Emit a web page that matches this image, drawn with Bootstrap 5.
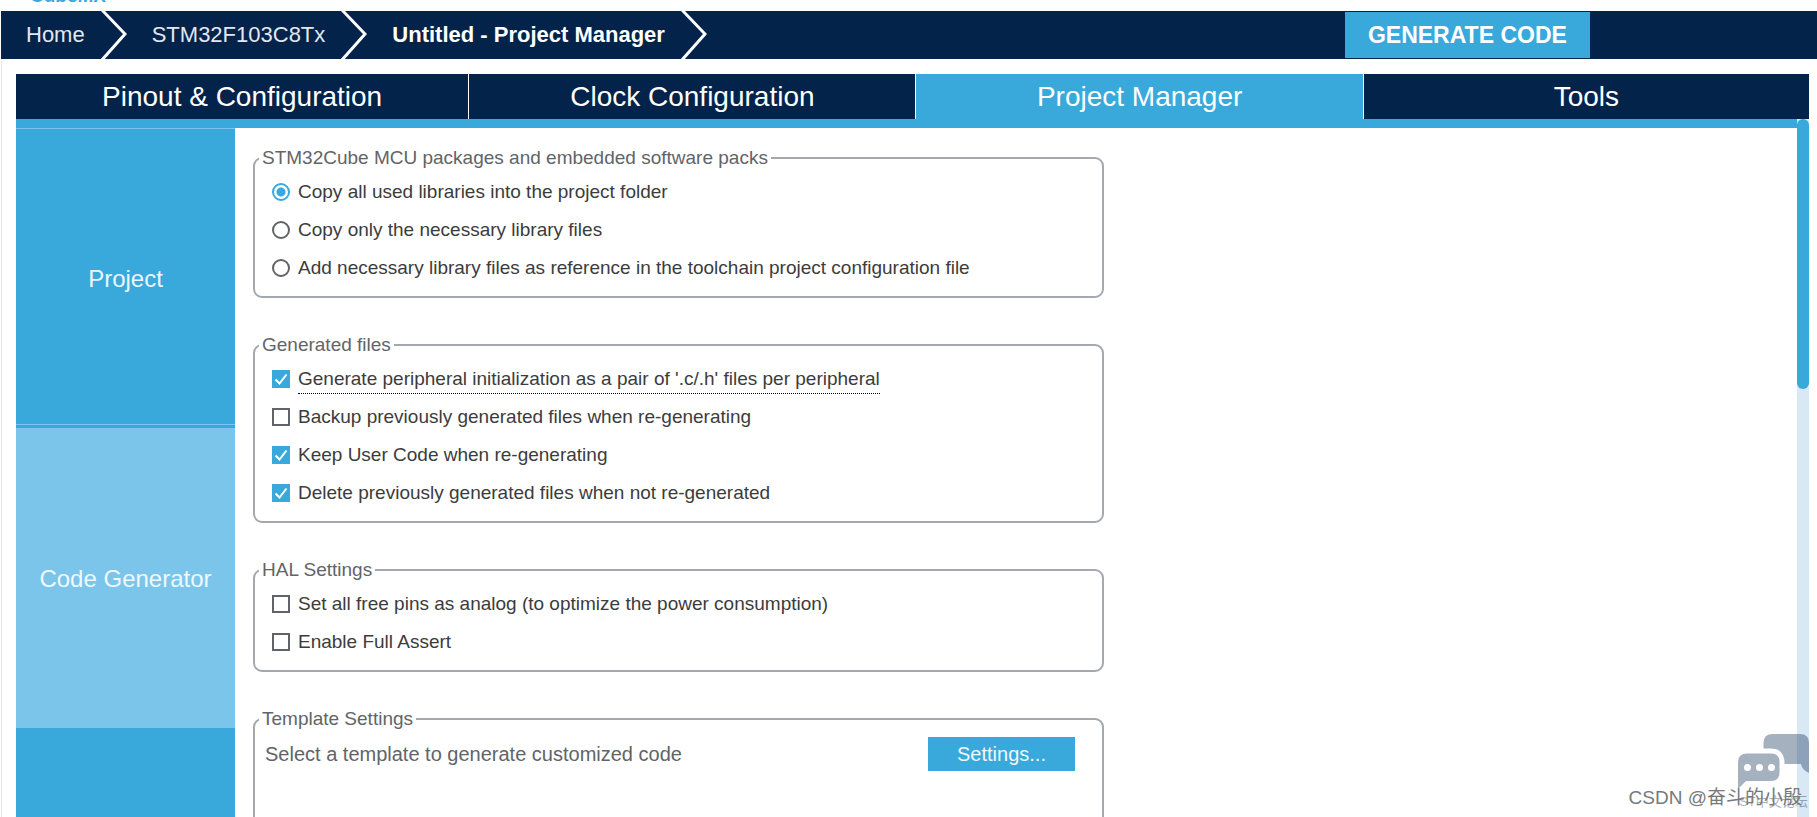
<!DOCTYPE html>
<html lang="en">
<head>
<meta charset="utf-8">
<meta name="viewport" content="width=device-width, initial-scale=1">
<title>STM32CubeMX - Project Manager</title>
<link href="https://cdn.jsdelivr.net/npm/bootstrap@5.3.0/dist/css/bootstrap.min.css" rel="stylesheet">
<style>
:root { --navy: #03234b; --sky: #39a9dc; --pale: #7cc5ea; --track: #d9e8f5; }
body { font-family: "Liberation Sans", Arial, sans-serif; font-size: 19px; line-height: 24px; color: #3c3c3c; background: #fff; }
a { text-decoration: none; }
.app-logo { height: 11px; padding-left: 30px; }
.app-logo span { color: var(--sky); font-size: 19px; font-weight: 700; line-height: 20px; margin-bottom: 5px; }
.app-header { background: var(--navy); height: 48px; margin-left: 1px; padding-left: 25px; font-size: 22px; }
.crumb { color: #fff; }
.crumb.dim { color: #e3e8ee; }
.chev { width: 26px; height: 48px; margin: 0 25px 0 16px; }
.chev path { fill: none; stroke: #fff; stroke-width: 3; }
.generate { width: 245px; height: 46px; margin-right: 12.5vw; background: var(--sky); color: #fff; font-size: 23px; line-height: 44px; font-weight: 700; }
.workspace { margin-left: 1px; border-left: 1px solid #e4e6e8; padding: 15px 8px 0 14px; }
.main-tabs { display: grid; grid-template-columns: 453fr 447fr 447fr 446fr; column-gap: 1px; }
.main-tabs a { height: 45px; line-height: 45px; background: var(--navy); color: #fff; font-size: 28px; text-align: center; }
.main-tabs a.active { background: var(--sky); }
.pane { border-top: 9px solid var(--sky); }
.side { width: 219px; background: var(--sky); }
.side button { height: 300px; border: 0; border-top: 1px solid var(--pale); background: var(--sky); color: #e9f6fc; font-size: 24px; }
.side button.before-active { box-shadow: inset 0 -3px var(--sky), inset 0 -4px var(--pale); }
.side button.active { background: var(--pale); color: #eef8fd; }
.options { padding: 18px 0 0 18px; }
.group { width: 851px; max-width: 100%; border: 2px solid #a3a9ae; border-radius: 9px; padding: 3px 17px 9px 4px; margin-bottom: 35px; }
.group legend { float: none; width: auto; margin: 0; padding: 0 3px; font-size: 19px; line-height: 24px; color: #626468; }
.opt { height: 38px; padding-left: 13px; gap: 8px; }
.opt .form-check-input { width: 18px; height: 18px; margin: 0; border: 2px solid #606468; border-radius: 0; box-shadow: none; }
.opt .form-check-input[type=radio] { border-radius: 50%; }
.opt .form-check-input[type=radio]:checked { border-color: var(--sky); background: radial-gradient(circle, var(--sky) 4px, #fff 5px); }
.opt .form-check-input[type=checkbox]:checked { border-color: var(--sky); background-color: var(--sky); background-size: 14px 14px; background-image: url("data:image/svg+xml,%3Csvg xmlns='http://www.w3.org/2000/svg' viewBox='0 0 14 14'%3E%3Cpath d='M1.500 7.500 5.500 11.500 12.500 2.500' fill='none' stroke='%23fff' stroke-width='2'/%3E%3C/svg%3E"); }
.hinted { border-bottom: 1px dotted #000; padding-top: 3px; padding-bottom: 2px; }
.template-row { padding-left: 6px; color: #626468; font-size: 20px; min-height: 180px; }
.settings { width: 147px; height: 34px; margin: 3px 10px 0 0; padding: 0; background: var(--sky); color: #eef8fd; font-size: 20px; }
.template-row p { margin: 8px 0 0; }
.scroll-track { width: 12px; background: var(--track); margin-top: -9px; }
.scroll-thumb { height: 270px; border-radius: 6px; background: var(--sky); }
.forum { right: 8px; bottom: 3px; width: 71px; color: var(--navy); opacity: .35; font-family: "Liberation Sans", "Noto Sans CJK SC", sans-serif; font-size: 13px; line-height: 24px; }
.author { right: 15px; bottom: 7px; color: #77797c; font-family: "Liberation Sans", "Noto Sans CJK SC", sans-serif; font-size: 19px; line-height: 24px; }
</style>
</head>
<body class="vh-100 overflow-hidden position-relative d-flex flex-column">
<div class="app-logo d-flex align-items-end overflow-hidden flex-shrink-0"><span>CubeMX</span></div>
<header class="app-header d-flex align-items-center flex-shrink-0">
  <nav class="d-flex align-items-center text-nowrap" aria-label="Breadcrumb">
    <a class="crumb dim" href="#">Home</a>
    <svg class="chev" viewBox="0 0 26 48" aria-hidden="true"><path d="M1-1 24 23 1 49"/></svg>
    <a class="crumb dim" href="#">STM32F103C8Tx</a>
    <svg class="chev" viewBox="0 0 26 48" aria-hidden="true"><path d="M1-1 24 23 1 49"/></svg>
    <a class="crumb fw-bold" href="#">Untitled - Project Manager</a>
    <svg class="chev" viewBox="0 0 26 48" aria-hidden="true"><path d="M1-1 24 23 1 49"/></svg>
  </nav>
  <button class="generate btn rounded-0 border-0 p-0 ms-auto" type="button">GENERATE CODE</button>
</header>
<main class="workspace flex-grow-1 d-flex flex-column overflow-hidden">
  <nav class="main-tabs flex-shrink-0">
    <a href="#">Pinout &amp; Configuration</a>
    <a href="#">Clock Configuration</a>
    <a class="active" href="#" aria-current="page">Project Manager</a>
    <a href="#">Tools</a>
  </nav>
  <div class="pane d-flex flex-grow-1">
    <div class="side d-flex flex-column flex-shrink-0">
      <button class="before-active" type="button">Project</button>
      <button class="active" type="button">Code Generator</button>
    </div>
    <form class="options flex-grow-1">
      <fieldset class="group">
        <legend>STM32Cube MCU packages and embedded software packs</legend>
        <div class="opt d-flex align-items-center"><input class="form-check-input" type="radio" name="lib" id="lib1" checked><label for="lib1">Copy all used libraries into the project folder</label></div>
        <div class="opt d-flex align-items-center"><input class="form-check-input" type="radio" name="lib" id="lib2"><label for="lib2">Copy only the necessary library files</label></div>
        <div class="opt d-flex align-items-center"><input class="form-check-input" type="radio" name="lib" id="lib3"><label for="lib3">Add necessary library files as reference in the toolchain project configuration file</label></div>
      </fieldset>
      <fieldset class="group">
        <legend>Generated files</legend>
        <div class="opt d-flex align-items-center"><input class="form-check-input" type="checkbox" id="gen1" checked><label class="hinted" for="gen1">Generate peripheral initialization as a pair of '.c/.h' files per peripheral</label></div>
        <div class="opt d-flex align-items-center"><input class="form-check-input" type="checkbox" id="gen2"><label for="gen2">Backup previously generated files when re-generating</label></div>
        <div class="opt d-flex align-items-center"><input class="form-check-input" type="checkbox" id="gen3" checked><label for="gen3">Keep User Code when re-generating</label></div>
        <div class="opt d-flex align-items-center"><input class="form-check-input" type="checkbox" id="gen4" checked><label for="gen4">Delete previously generated files when not re-generated</label></div>
      </fieldset>
      <fieldset class="group">
        <legend>HAL Settings</legend>
        <div class="opt d-flex align-items-center"><input class="form-check-input" type="checkbox" id="hal1"><label for="hal1">Set all free pins as analog (to optimize the power consumption)</label></div>
        <div class="opt d-flex align-items-center"><input class="form-check-input" type="checkbox" id="hal2"><label for="hal2">Enable Full Assert</label></div>
      </fieldset>
      <fieldset class="group">
        <legend>Template Settings</legend>
        <div class="template-row d-flex justify-content-between align-items-start">
          <p>Select a template to generate customized code</p>
          <button class="settings btn rounded-0 border-0" type="button">Settings...</button>
        </div>
      </fieldset>
    </form>
    <div class="scroll-track flex-shrink-0"><div class="scroll-thumb"></div></div>
  </div>
</main>
<div class="forum position-absolute text-nowrap">
  <svg class="d-block" width="71" height="56" viewBox="0 0 71 56" aria-hidden="true" fill="currentColor">
    <path d="M25.500 14.500V9Q25.500 0 34.500 0H62Q71 0 71 9V39Q64 36 63 30H46.500V27Q45 14.500 33 14.500Z"/>
    <path fill-rule="evenodd" d="M9 19.500H33Q41.500 19.500 41.500 28V38.500Q41.500 47 33 47H8L0 55V28Q0 19.500 9 19.500ZM9.500 30a3.500 3.500 0 1 0 0 7 3.500 3.500 0 1 0 0-7ZM21.500 30a3.500 3.500 0 1 0 0 7 3.500 3.500 0 1 0 0-7ZM33.500 30a3.500 3.500 0 1 0 0 7 3.500 3.500 0 1 0 0-7Z"/>
  </svg>
  <span class="d-block text-center">ST中文论坛</span>
</div>
<div class="author position-absolute text-nowrap">CSDN @奋斗的小殷</div>
<script src="https://cdn.jsdelivr.net/npm/bootstrap@5.3.0/dist/js/bootstrap.bundle.min.js"></script>
</body>
</html>
